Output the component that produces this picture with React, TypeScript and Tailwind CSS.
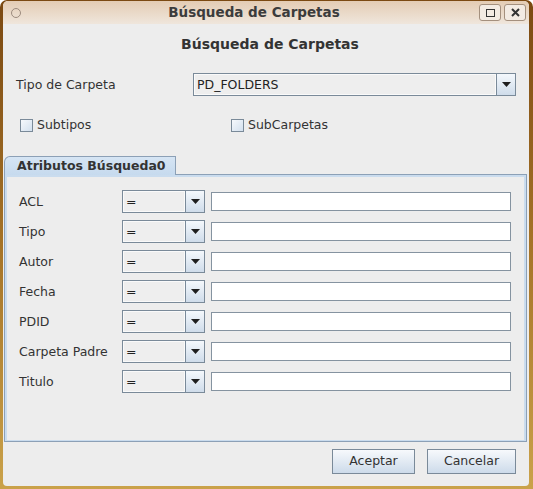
import React from "react";

const OPERADORES = ["ACL", "Tipo", "Autor", "Fecha", "PDID", "Carpeta Padre", "Titulo"];

function Flecha() {
  return (
    <svg width="9" height="5" viewBox="0 0 9 5">
      <path d="M0 0H9L4.5 5Z" fill="#1e1e1e" />
    </svg>
  );
}

function Combo({ valor, className }: { valor: string; className: string }) {
  return (
    <div className={`flex h-[23px] border border-[#7a8a99] bg-[#eeeeee] ${className}`}>
      <div className="flex min-w-0 flex-1 items-center border border-[#fafafa] pl-[2px] pt-[1px] text-[12.5px] text-[#222]">{valor}</div>
      <div className="flex w-[19px] items-center justify-center border-l border-[#7a8a99] bg-gradient-to-b from-[#f4f8fc] to-[#cfdcea]">
        <Flecha />
      </div>
    </div>
  );
}

function Casilla({ texto }: { texto: string }) {
  return (
    <div className="flex items-center">
      <span className="h-[13px] w-[13px] border border-[#7a8a99] bg-gradient-to-br from-[#f6f9fc] to-[#d3e0ee]" />
      <span className="ml-[4px] text-[12.5px] text-[#333]">{texto}</span>
    </div>
  );
}

function Boton({ texto, className }: { texto: string; className: string }) {
  return (
    <button className={`h-[25px] border border-[#7a8a99] bg-gradient-to-b from-[#f7f9fc] to-[#cddbea] text-[12.5px] text-[#333] ${className}`}>
      {texto}
    </button>
  );
}

export default function App() {
  return (
    <div className="flex h-[489px] w-[533px] flex-col rounded-t-[7px] bg-gradient-to-b from-[#7b4912] via-[#a67428] to-[#caa24a] pb-[3px] pl-[3px] pr-[4px] pt-[1px] font-['DejaVu_Sans',sans-serif]">
      <div className="flex flex-1 flex-col overflow-hidden rounded-t-[5px] rounded-b-[4px] bg-[#ededed]">
        {/* barra de título */}
        <div className="relative flex h-[23px] items-center bg-gradient-to-b from-[#e4ccb4] to-[#efe6dc]">
          <span className="ml-[8px] h-[10px] w-[10px] rounded-full border border-[#9c8b7e]" />
          <span className="absolute inset-x-0 pr-[24px] text-center text-[13.5px] font-bold text-[#3c3c3c]">Búsqueda de Carpetas</span>
          <div className="ml-auto mr-[3px] flex gap-[3px]">
            <span className="flex h-[17px] w-[22px] items-center justify-center rounded-[3px] border border-[#a4907e] bg-[#f3ebe3]">
              <span className="h-[8px] w-[9px] border-[1.5px] border-[#333]" />
            </span>
            <span className="flex h-[17px] w-[22px] items-center justify-center rounded-[3px] border border-[#a4907e] bg-[#f3ebe3]">
              <svg width="9" height="9" viewBox="0 0 9 9">
                <path d="M1 1L8 8M8 1L1 8" stroke="#333" strokeWidth="2" />
              </svg>
            </span>
          </div>
        </div>

        <div className="flex flex-1 flex-col">
          <div className="mt-[10px] h-[20px] pl-[8px] text-center text-[14px] font-bold leading-[20px] text-[#333]">Búsqueda de Carpetas</div>

          <div className="mt-[19px] flex items-center">
            <span className="w-[190px] pl-[13px] pt-[1px] text-[12.5px] text-[#333]">Tipo de Carpeta</span>
            <Combo valor="PD_FOLDERS" className="w-[323px]" />
          </div>

          <div className="mt-[23px] flex h-[13px] items-center pl-[17px]">
            <div className="w-[211px]">
              <Casilla texto="Subtipos" />
            </div>
            <Casilla texto="SubCarpetas" />
          </div>

          <div className="ml-[1px] mr-[2px] mt-[24px]">
            <div className="relative z-10 -mb-px flex h-[19px] w-[172px] items-center rounded-tl-[6px] border border-b-0 border-[#8ca0b6] bg-gradient-to-b from-[#d6e5f4] to-[#c6daee] pl-[12px] text-[12.5px] font-bold text-[#333]">
              Atributos Búsqueda0
            </div>
            <div className="h-[268px] border border-[#8ca0b6]">
              <div className="flex h-full flex-col gap-[7px] border-2 border-b border-[#cadcee] pl-[12px] pr-[13px] pt-[13px]">
                {OPERADORES.map((nombre) => (
                  <div key={nombre} className="flex h-[23px] items-center">
                    <span className="w-[103px] pt-[1px] text-[12.5px] text-[#333]">{nombre}</span>
                    <Combo valor="=" className="w-[83px]" />
                    <div className="ml-[6px] h-[19px] flex-1 border border-[#8593a0] bg-white" />
                  </div>
                ))}
              </div>
            </div>
          </div>

          <div className="mr-[13px] mt-[7px] flex justify-end gap-[12px]">
            <Boton texto="Aceptar" className="w-[83px]" />
            <Boton texto="Cancelar" className="w-[89px]" />
          </div>
        </div>
      </div>
    </div>
  );
}
